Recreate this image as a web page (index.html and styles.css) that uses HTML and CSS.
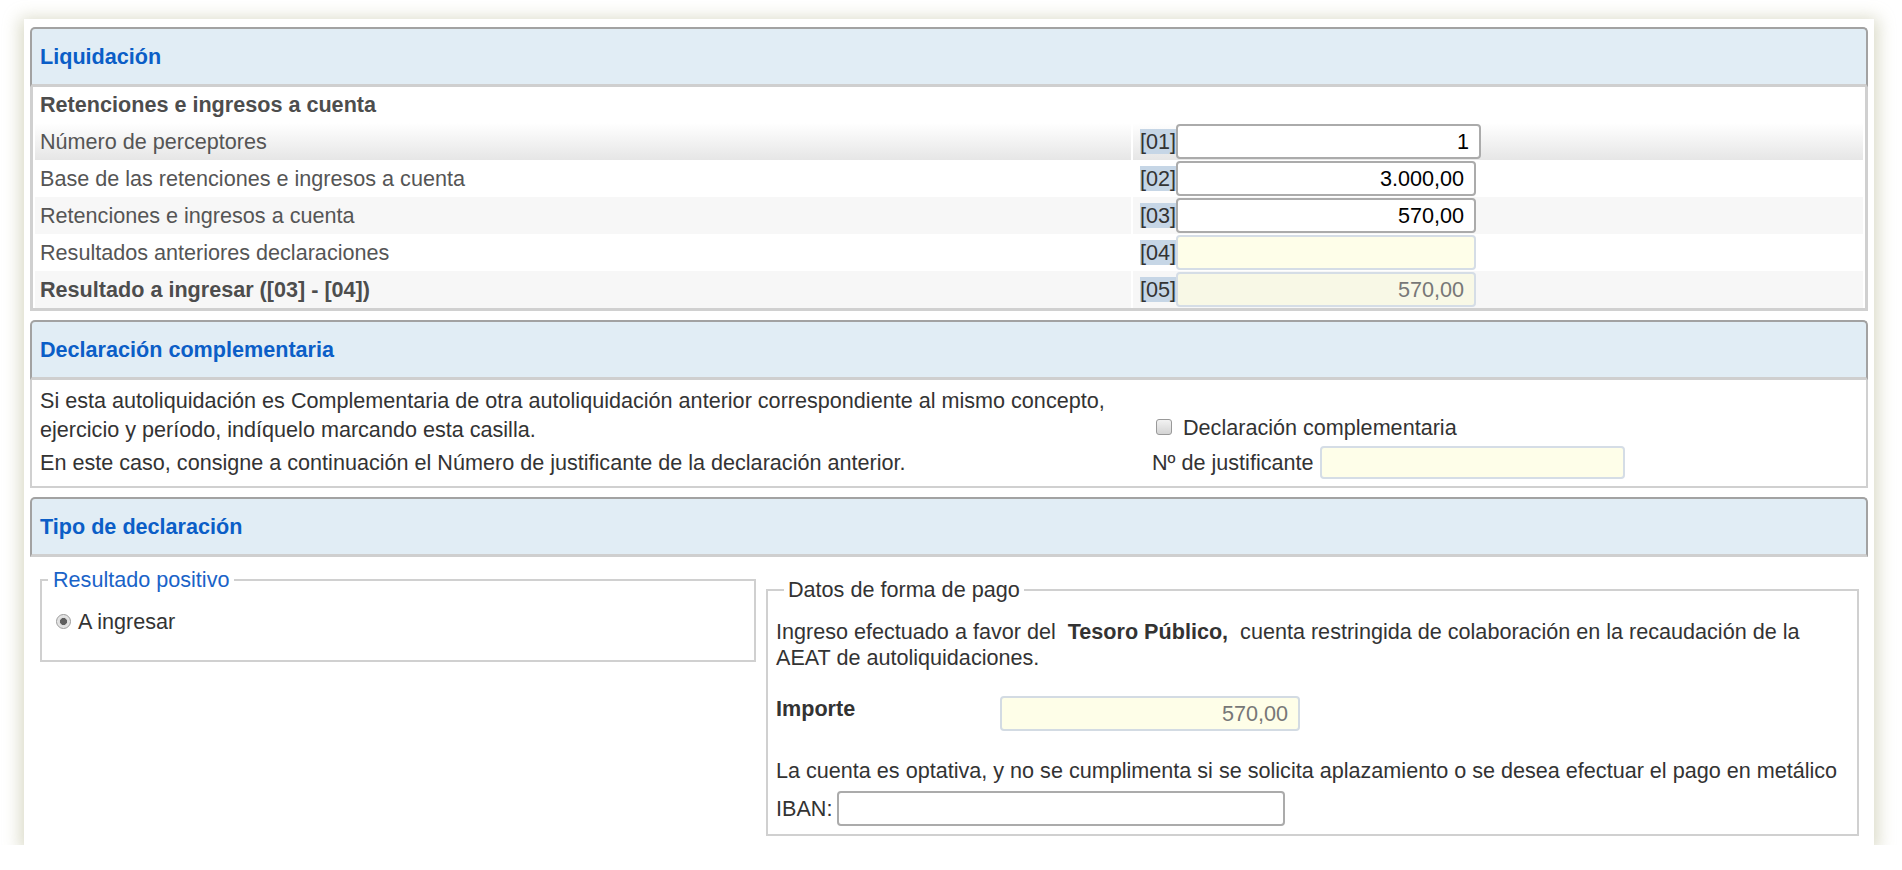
FILE: index.html
```html
<!DOCTYPE html>
<html lang="es">
<head>
<meta charset="utf-8">
<title>Liquidación</title>
<link rel="stylesheet" href="styles.css">
</head>
<body>
<div class="panel">
  <section class="sec">
    <div class="sec-head">Liquidación</div>
    <div class="sec-body liq-body">
      <table class="liq">
        <colgroup><col class="c1"><col class="c2"></colgroup>
        <tr class="sub"><td>Retenciones e ingresos a cuenta</td><td></td></tr>
        <tr class="hov"><td>Número de perceptores</td><td><span class="code">[01]</span><input class="fld edit wide" value="1"></td></tr>
        <tr><td>Base de las retenciones e ingresos a cuenta</td><td><span class="code">[02]</span><input class="fld edit" value="3.000,00"></td></tr>
        <tr class="alt"><td>Retenciones e ingresos a cuenta</td><td><span class="code">[03]</span><input class="fld edit" value="570,00"></td></tr>
        <tr><td>Resultados anteriores declaraciones</td><td><span class="code">[04]</span><input class="fld ro" value=""></td></tr>
        <tr class="alt"><td class="bold">Resultado a ingresar ([03] - [04])</td><td><span class="code">[05]</span><input class="fld ro dim" value="570,00" readonly></td></tr>
      </table>
    </div>
  </section>

  <section class="sec">
    <div class="sec-head">Declaración complementaria</div>
    <div class="sec-body comp-body">
      <table class="comp">
        <colgroup><col class="d1"><col class="d2"></colgroup>
        <tr class="r1">
          <td>Si esta autoliquidación es Complementaria de otra autoliquidación anterior correspondiente al mismo concepto, ejercicio y período, indíquelo marcando esta casilla.</td>
          <td class="bottom"><label class="chk"><span class="box"></span>Declaración complementaria</label></td>
        </tr>
        <tr class="r2">
          <td>En este caso, consigne a continuación el Número de justificante de la declaración anterior.</td>
          <td><span class="just">Nº de justificante</span><input class="fld ro just-in" value=""></td>
        </tr>
      </table>
    </div>
  </section>

  <section class="sec last">
    <div class="sec-head">Tipo de declaración</div>
    <div class="tipo">
      <fieldset class="fs fs1">
        <legend class="lg blue">Resultado positivo</legend>
        <label class="radio"><span class="dot"></span>A ingresar</label>
      </fieldset>
      <fieldset class="fs fs2">
        <legend class="lg">Datos de forma de pago</legend>
        <p class="txt"><span>Ingreso efectuado a favor del</span><b class="tes">Tesoro Público,</b><span>cuenta restringida de colaboración en la recaudación de la</span><br><span>AEAT de autoliquidaciones.</span></p>
        <div class="imp-row"><b class="imp-lbl">Importe</b><input class="fld ro dim imp-in" value="570,00" readonly></div>
        <p class="txt opt">La cuenta es optativa, y no se cumplimenta si se solicita aplazamiento o se desea efectuar el pago en metálico</p>
        <div class="iban-row"><span>IBAN:</span><input class="fld edit iban-in" value=""></div>
      </fieldset>
    </div>
  </section>
</div>
</body>
</html>
```

FILE: styles.css
```css
html, body {
  margin: 0;
  padding: 0;
  background: #ffffff;
}
body {
  font-family: "Liberation Sans", Arial, sans-serif;
  font-size: 21.6px;
  color: #333333;
}
.panel {
  box-sizing: border-box;
  width: 1850px;
  margin: 19px 0 0 24px;
  padding: 8px 6px 9px 6px;
  background: #ffffff;
  box-shadow: 0 3px 16px 4px rgba(205, 205, 180, 0.75);
}
.sec {
  margin-bottom: 9px;
}
.sec.last {
  margin-bottom: 0;
}
.sec-head {
  box-sizing: border-box;
  height: 60px;
  border: 2px solid #a2a2a2;
  border-bottom: 3px solid #cfcfcf;
  border-radius: 5px 5px 0 0;
  background: #e1edf5;
  color: #0b5ec7;
  font-weight: bold;
  display: flex;
  align-items: center;
  padding-left: 8px;
}
.sec-body {
  border: 3px solid #d0d0d0;
  border-top: none;
}
.liq {
  width: 100%;
  table-layout: fixed;
  border-collapse: separate;
  border-spacing: 2px 0;
}
.liq .c1 { width: 1096px; }
.liq td {
  height: 37px;
  padding: 0 0 0 5px;
  color: #555555;
  vertical-align: middle;
  white-space: nowrap;
}
.liq td + td {
  padding-left: 7px;
}
.liq tr.sub td {
  height: 36px;
  font-weight: bold;
  color: #4d4d4d;
}
.liq td.bold {
  font-weight: bold;
  color: #4d4d4d;
}
.liq tr.hov td {
  background: linear-gradient(#ffffff, #e6e6e6);
}
.liq tr.alt td {
  background: #f7f7f7;
}
.code {
  background: #c6d6e6;
  color: #333333;
  vertical-align: middle;
}
.fld {
  box-sizing: border-box;
  height: 35px;
  width: 300px;
  font-family: "Liberation Sans", Arial, sans-serif;
  font-size: 21.6px;
  color: #000000;
  text-align: right;
  padding: 0 10px;
  border-radius: 4px;
  margin: 0;
  vertical-align: middle;
  outline: none;
}
.fld.edit {
  background: #ffffff;
  border: 2px solid #ababab;
}
.fld.wide {
  width: 305px;
}
.fld.ro {
  background: #fefee9;
  border: 2px solid #d5dde6;
}
.fld.dim {
  background: #f8f8e6;
  color: #777777;
}

.comp-body {
  border-width: 2px;
  padding: 6px 0 5px 0;
}
.comp {
  width: 100%;
  table-layout: fixed;
  border-collapse: collapse;
}
.comp .d1 { width: 1110px; }
.comp td {
  padding: 0 0 0 8px;
  line-height: 29px;
  vertical-align: middle;
}
.comp td + td {
  padding-left: 10px;
}
.comp td.bottom {
  vertical-align: bottom;
}
.comp tr.r1 td.bottom {
  padding-bottom: 2px;
}
.comp tr.r2 td {
  height: 37px;
}
.chk {
  display: inline-flex;
  align-items: center;
}
.box {
  box-sizing: border-box;
  width: 16px;
  height: 16px;
  margin: 0 11px 0 4px;
  border: 1px solid #999999;
  border-radius: 3px;
  background: linear-gradient(#f2f2f2, #d4d4d4);
}
.just {
  margin-right: 6px;
  vertical-align: middle;
}
.fld.just-in {
  width: 305px;
  height: 33px;
}

.tipo {
  display: flex;
  align-items: flex-start;
  padding: 10px 9px 0 10px;
}
.fs {
  margin: 0;
  border: 2px solid #d0d0d0;
  min-width: 0;
}
.lg {
  line-height: 25px;
  padding: 0 5px;
  color: #333333;
}
.lg.blue {
  color: #1a63c8;
}
.fs1 {
  box-sizing: border-box;
  width: 716px;
  height: 95px;
  padding: 15px 10px 0 14px;
}
.fs1 .lg {
  margin-left: -8px;
}
.fs2 {
  flex: 1;
  margin: 10px 0 0 10px;
  padding: 17px 10px 8px 8px;
}
.fs2 .lg {
  margin-left: 8px;
  padding: 0 4px;
}
.radio {
  display: flex;
  align-items: center;
  line-height: 29px;
}
.dot {
  box-sizing: border-box;
  width: 15px;
  height: 15px;
  margin-right: 7px;
  border-radius: 50%;
  border: 1px solid #9a9a9a;
  background: radial-gradient(circle, #5e5e5e 0 3.2px, #dcdcdc 3.8px, #f2f2f2 100%);
}
.txt {
  margin: 0;
  line-height: 26px;
}
.tes {
  margin: 0 12px 0 12px;
}
.imp-row {
  display: flex;
  align-items: flex-start;
  margin-top: 25px;
}
.imp-lbl {
  width: 224px;
  line-height: 26px;
  color: #333333;
}
.fld.imp-in {
  border-color: #d3dbe3;
  background: #fefee8;
}
.opt {
  margin-top: 27px;
}
.iban-row {
  display: flex;
  align-items: center;
  margin-top: 7px;
}
.iban-row span {
  margin-right: 5px;
}
.fld.iban-in {
  width: 448px;
}
```
